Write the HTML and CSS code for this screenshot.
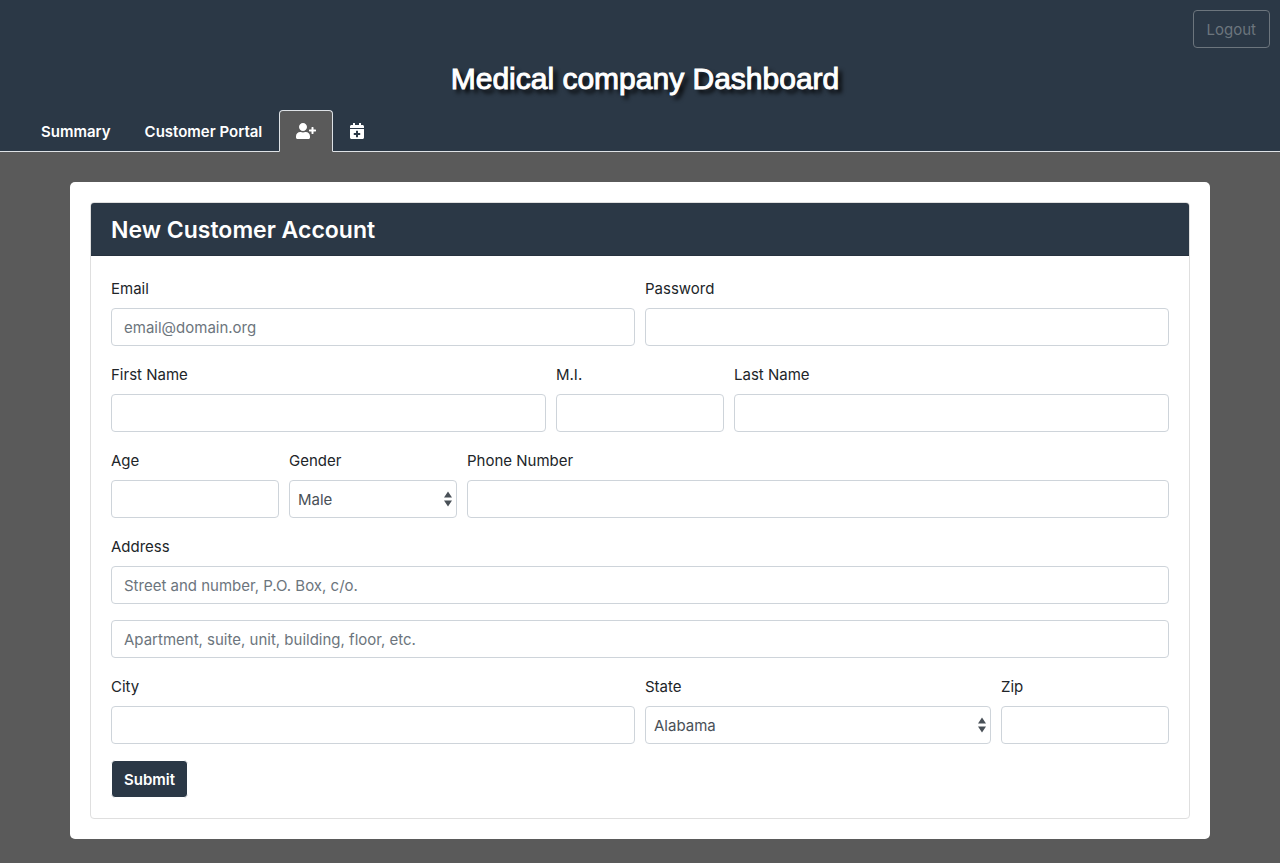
FILE: index.html
```html
<!DOCTYPE html>
<html lang="en">
<head>
<meta charset="utf-8">
<meta name="viewport" content="width=device-width, initial-scale=1">
<title>Medical company Dashboard</title>
<link rel="stylesheet" href="styles.css">
</head>
<body>
<header class="site-header">
  <div class="toolbar"><button type="button" class="btn btn-outline">Logout</button></div>
  <h1 class="site-title">Medical company Dashboard</h1>
  <nav class="tabs">
    <a class="tab" href="#summary">Summary</a>
    <a class="tab" href="#portal">Customer Portal</a>
    <a class="tab active" href="#new-customer" aria-label="New customer" aria-current="page">
      <svg class="icon" width="20" height="16" viewBox="0 0 640 512" aria-hidden="true"><path fill="currentColor" d="M624 208h-64v-64c0-8.800-7.200-16-16-16h-32c-8.800 0-16 7.200-16 16v64h-64c-8.800 0-16 7.200-16 16v32c0 8.800 7.200 16 16 16h64v64c0 8.800 7.200 16 16 16h32c8.800 0 16-7.200 16-16v-64h64c8.800 0 16-7.200 16-16v-32c0-8.800-7.200-16-16-16zm-400 48c70.700 0 128-57.300 128-128S294.700 0 224 0 96 57.300 96 128s57.300 128 128 128zm89.600 32h-16.700c-22.200 10.200-46.900 16-72.900 16s-50.600-5.800-72.900-16h-16.700C60.200 288 0 348.200 0 422.400V464c0 26.500 21.500 48 48 48h352c26.500 0 48-21.500 48-48v-41.600c0-74.200-60.200-134.400-134.400-134.400z"/></svg>
    </a>
    <a class="tab" href="#appointment" aria-label="New appointment">
      <svg class="icon" width="14" height="16" viewBox="0 0 448 512" aria-hidden="true"><path fill="currentColor" d="M436 160H12c-6.600 0-12-5.400-12-12v-36c0-26.500 21.500-48 48-48h48V12c0-6.600 5.400-12 12-12h40c6.600 0 12 5.400 12 12v52h128V12c0-6.600 5.400-12 12-12h40c6.600 0 12 5.400 12 12v52h48c26.500 0 48 21.500 48 48v36c0 6.600-5.400 12-12 12zM12 192h424c6.600 0 12 5.400 12 12v260c0 26.500-21.500 48-48 48H48c-26.500 0-48-21.500-48-48V204c0-6.600 5.400-12 12-12zm316 140c0-6.600-5.400-12-12-12h-60v-60c0-6.600-5.400-12-12-12h-40c-6.600 0-12 5.400-12 12v60h-60c-6.600 0-12 5.400-12 12v40c0 6.600 5.400 12 12 12h60v60c0 6.600 5.400 12 12 12h40c6.600 0 12-5.400 12-12v-60h60c6.600 0 12-5.400 12-12v-40z"/></svg>
    </a>
  </nav>
</header>
<main class="panel">
  <section class="card">
    <h2 class="card-header">New Customer Account</h2>
    <form class="card-body">
      <div class="field span-6"><label for="email">Email</label><input class="control" id="email" type="email" placeholder="email@domain.org"></div>
      <div class="field span-6"><label for="password">Password</label><input class="control" id="password" type="password"></div>
      <div class="field span-5"><label for="first">First Name</label><input class="control" id="first" type="text"></div>
      <div class="field span-2"><label for="mi">M.I.</label><input class="control" id="mi" type="text"></div>
      <div class="field span-5"><label for="last">Last Name</label><input class="control" id="last" type="text"></div>
      <div class="field span-2"><label for="age">Age</label><input class="control" id="age" type="text"></div>
      <div class="field span-2"><label for="gender">Gender</label><select class="control select" id="gender"><option>Male</option><option>Female</option></select></div>
      <div class="field span-8"><label for="phone">Phone Number</label><input class="control" id="phone" type="tel"></div>
      <div class="field span-12"><label for="address">Address</label><input class="control" id="address" type="text" placeholder="Street and number, P.O. Box, c/o."></div>
      <div class="field span-12"><input class="control" id="address2" type="text" aria-label="Address line 2" placeholder="Apartment, suite, unit, building, floor, etc."></div>
      <div class="field span-6"><label for="city">City</label><input class="control" id="city" type="text"></div>
      <div class="field span-4"><label for="state">State</label><select class="control select" id="state"><option>Alabama</option><option>Alaska</option></select></div>
      <div class="field span-2"><label for="zip">Zip</label><input class="control" id="zip" type="text"></div>
      <div class="span-12"><button type="submit" class="btn btn-primary">Submit</button></div>
    </form>
  </section>
</main>
</body>
</html>
```
FILE: styles.css
```css
*, *::before, *::after { box-sizing: border-box; }

body {
  margin: 0;
  padding-bottom: 24px;
  background: #5a5a5a;
  color: #212529;
  font-family: Inter, "Liberation Sans", sans-serif;
  font-size: 15px;
  line-height: 24px;
}

.site-header { background: #2b3846; }

.toolbar {
  display: flex;
  justify-content: flex-end;
  padding: 10px 10px 0;
}

.site-title {
  margin: 0;
  padding: 11px 0 11px 10px;
  color: #fff;
  font-family: "Liberation Sans", Arial, sans-serif;
  font-size: 30px;
  font-weight: 400;
  line-height: 40px;
  text-align: center;
  text-shadow: 4px 4px 4px #000;
  -webkit-text-stroke: 1px #fff;
}

.tabs {
  display: flex;
  padding-left: 24px;
  border-bottom: 1px solid #dee2e6;
}

.tab {
  margin-bottom: -1px;
  padding: 9px 16px 7px;
  border: 1px solid transparent;
  border-radius: 4px 4px 0 0;
  color: #fff;
  font-weight: 600;
  text-decoration: none;
}

.tab.active {
  border-color: #dee2e6 #dee2e6 #5a5a5a;
  background: #5a5a5a;
}

.icon { display: inline-block; vertical-align: -2px; }

.btn {
  padding: 7px 12px 5px;
  border: 1px solid;
  border-radius: 4px;
  font: inherit;
}

.btn-outline {
  padding-inline: 13px;
  border-color: #6c757d;
  background: transparent;
  color: #6c757d;
}

.btn-primary {
  border-color: #fff;
  background: #2b3846;
  color: #fff;
  font-weight: 600;
}

.panel {
  max-width: 1140px;
  margin: 30px auto 0;
  padding: 20px;
  border-radius: 5px;
  background: #fff;
}

.card {
  border: 1px solid #dfdfdf;
  border-radius: 4px;
  overflow: hidden;
}

.card-header {
  margin: 0;
  padding: 13px 20px 11px;
  border-bottom: 1px solid #26313e;
  background: #2b3846;
  color: #fff;
  font-size: 23px;
  font-weight: 600;
  line-height: 28px;
}

.card-body {
  display: grid;
  grid-template-columns: repeat(12, minmax(0, 1fr));
  gap: 16px 10px;
  padding: 20px;
}

.field {
  display: flex;
  flex-direction: column;
}

.field label { padding: 1px 0 7px; }

.span-2 { grid-column: span 2; }
.span-4 { grid-column: span 4; }
.span-5 { grid-column: span 5; }
.span-6 { grid-column: span 6; }
.span-8 { grid-column: span 8; }
.span-12 { grid-column: span 12; }

.control {
  width: 100%;
  height: 38px;
  padding: 6px 12px;
  border: 1px solid #ced4da;
  border-radius: 4px;
  background-color: #fff;
  color: #495057;
  font: inherit;
}

.control::placeholder { color: #6c757d; opacity: 1; }

.select {
  padding: 7px 8px 5px;
  appearance: none;
  background-image: url("data:image/svg+xml,%3Csvg xmlns='http://www.w3.org/2000/svg' viewBox='0 0 8 16'%3E%3Cpath fill='%23495057' d='M0 6.500 4 .5l4 6zM0 9.500l4 6 4-6z'/%3E%3C/svg%3E");
  background-repeat: no-repeat;
  background-position: right 4px center;
  background-size: 8px 16px;
}
```
